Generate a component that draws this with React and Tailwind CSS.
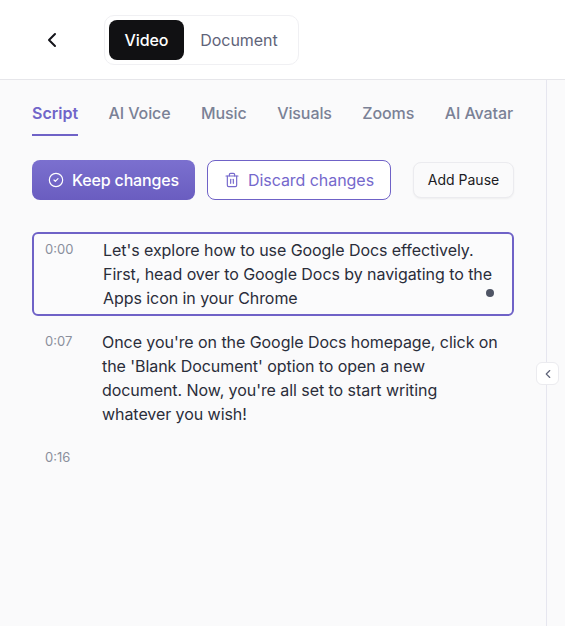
import { ChevronLeft, CircleCheck, Trash2 } from 'lucide-react'

const tabs = ['Script', 'AI Voice', 'Music', 'Visuals', 'Zooms', 'AI Avatar']

export default function App() {
  return (
    <div className="relative h-[626px] w-[565px] overflow-hidden bg-[#fafafb] font-['Inter',sans-serif]">
      {/* Top bar */}
      <div className="flex h-20 items-center border-b border-[#e6e6ea] bg-white pl-10">
        <ChevronLeft size={24} strokeWidth={2} className="text-[#14141a]" />
        <div className="ml-10 flex h-[50px] items-center rounded-[10px] border border-[#f0f0f3] bg-white p-1">
          <div className="flex h-10 w-[75px] items-center justify-center rounded-lg bg-[#111113] text-base font-medium tracking-[-0.1px] text-white">Video</div>
          <div className="flex h-10 w-[110px] items-center justify-center text-base font-normal tracking-[-0.05px] text-[#5f6479]">Document</div>
        </div>
      </div>

      <div className="flex h-[546px]">
        {/* Left panel */}
        <div className="w-[547px] border-r border-[#e6e6ef] pl-8">
          <div className="flex h-14 w-[482px] gap-[30.5px] pt-[21px]">
            {tabs.map((t, i) => (
              <div key={t} className={i === 0 ? 'h-[35px] border-b-2 border-[#6f62c7] text-base leading-6 font-semibold whitespace-nowrap text-[#7065c9]' : 'h-[35px] text-base leading-6 font-medium tracking-[-0.1px] whitespace-nowrap text-[#7a8196]'}>
                {t}
              </div>
            ))}
          </div>

          <div className="mt-6 flex w-[482px] items-center">
            <button className="flex h-10 w-[163px] items-center justify-center gap-2 rounded-lg bg-gradient-to-b from-[#7b70cf] to-[#6a5dc0] text-base font-medium tracking-[-0.15px] text-white">
              <CircleCheck size={16} strokeWidth={1.75} />
              Keep changes
            </button>
            <button className="ml-3 flex h-10 w-[184px] items-center justify-center gap-2 rounded-lg border border-[#6f62c7] bg-white text-base font-normal tracking-[-0.05px] text-[#7568cc]">
              <Trash2 size={16} strokeWidth={1.75} />
              Discard changes
            </button>
            <button className="ml-auto h-9 w-[101px] rounded-lg border border-[#ebebef] bg-[#fafafb] text-sm font-normal text-[#1c1c24] shadow-xs">
              Add Pause
            </button>
          </div>

          {/* Script blocks */}
          <div className="relative mt-8 flex h-[84px] w-[482px] rounded-md border-2 border-[#6f62c7] bg-[#fbfbfc] pt-1 pl-[11px]">
            <div className="w-[58px] shrink-0 pt-px text-[13px] leading-5 text-[#8a8f9c]">0:00</div>
            <div className="w-[400px] text-base leading-6 tracking-[-0.06px] text-[#2a2d3a]">
              Let's explore how to use Google Docs effectively. First, head over to Google Docs by navigating to the Apps icon in your Chrome
            </div>
            <span className="absolute right-[18px] bottom-[17px] size-2 rounded-full bg-[#4f5565]" />
          </div>

          <div className="mt-3.5 flex w-[482px] pl-[13px]">
            <div className="w-[57px] shrink-0 pt-px text-[13px] leading-5 text-[#8a8f9c]">0:07</div>
            <div className="w-[400px] text-base leading-6 tracking-[-0.06px] text-[#2a2d3a]">
              Once you're on the Google Docs homepage, click on the 'Blank Document' option to open a new document. Now, you're all set to start writing whatever you wish!
            </div>
          </div>

          <div className="mt-[21px] pl-[13px] text-[13px] leading-5 text-[#8a8f9c]">0:16</div>
        </div>
      </div>

      {/* Collapse handle */}
      <button className="absolute top-[362px] left-[536px] flex size-[23px] items-center justify-center rounded-md border border-[#ebebef] bg-white text-[#5f6479]">
        <ChevronLeft size={14} strokeWidth={2} />
      </button>
    </div>
  )
}
